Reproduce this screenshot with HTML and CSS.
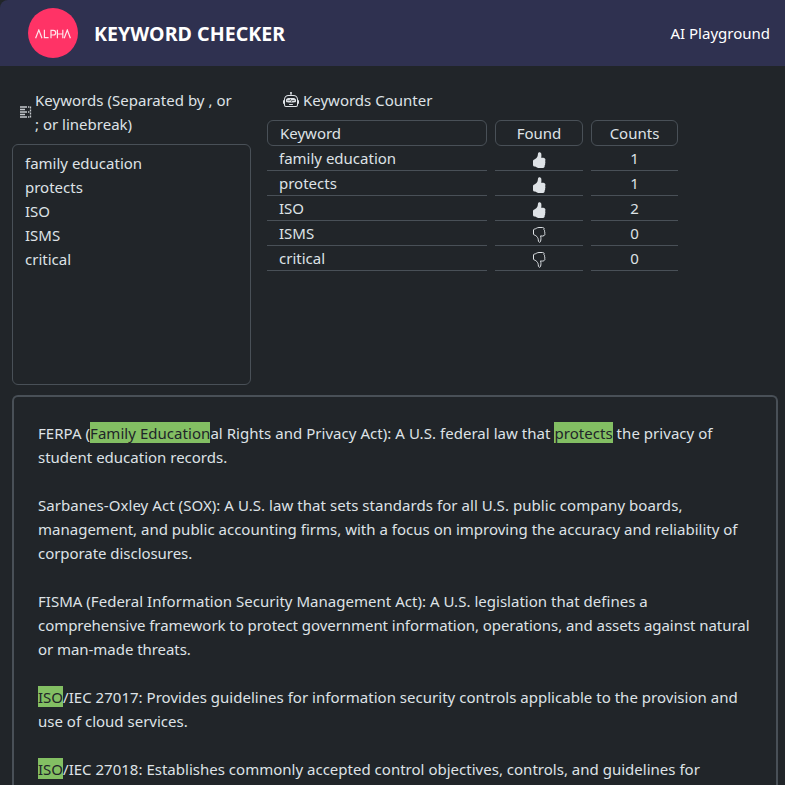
FILE: index.html
```html
<!DOCTYPE html>
<html lang="en">
<head>
<meta charset="utf-8">
<title>Keyword Checker</title>
<link rel="stylesheet" href="styles.css">
</head>
<body>
<svg class="defs" aria-hidden="true">
  <symbol id="thumb-up" viewBox="0 0 16 16"><path fill="currentColor" d="M6.956 1.745C7.021.81 7.908.087 8.864.325l.261.066c.463.116.874.456 1.012.965.22.816.533 2.511.062 4.51a9.84 9.84 0 0 1 .443-.051c.713-.065 1.669-.072 2.516.21.518.173.994.681 1.2 1.273.184.532.16 1.162-.234 1.733.058.119.103.242.138.363.077.27.113.567.113.856 0 .289-.036.586-.113.856-.039.135-.09.273-.16.404.169.387.107.819-.003 1.148a3.163 3.163 0 0 1-.488.901c.054.152.076.312.076.465 0 .305-.089.625-.253.912C13.1 15.522 12.437 16 11.5 16H8c-.605 0-1.07-.081-1.466-.218a4.82 4.82 0 0 1-.97-.484l-.048-.03c-.504-.307-.999-.609-2.068-.722C2.682 14.464 2 13.846 2 13V9c0-.85.685-1.432 1.357-1.615.849-.232 1.574-.787 2.132-1.41.56-.627.914-1.28 1.039-1.639.199-.575.356-1.539.428-2.59z"/></symbol>
  <symbol id="thumb-down" viewBox="0 0 16 16"><path fill="none" stroke="currentColor" d="M8.9 15.2c-.7.2-1.4-.3-1.45-1-.07-1.1-.24-2.1-.45-2.75-.35-1.1-1.7-2.9-3.5-3.4C2.9 7.9 2.5 7.5 2.5 7V3c0-.5.4-.9 1-.96 1.9-.2 2.2-1.54 4.5-1.54h3.5c1.1 0 1.8.7 1.6 1.6l-.2.5c.5.4.9 1 .6 1.7.4.5.4 1.4.1 1.9.5.6.4 1.7-.5 2.4-.8.6-2.4.5-3.5.3.5 1.8.4 3.6 0 5.3-.1.5-.3.8-.7 1z"/></symbol>
</svg>
<header class="topbar">
  <div class="logo"><svg class="logo-mark" viewBox="0 0 36 10" role="img" aria-label="Alpha"><path d="M.6 9.2 3.8 1 7 9.2M9.4.8v7.9h4.2M16 9.3V1.4h2.4a2.2 2.2 0 0 1 0 4.6H16M22.4.8v8.5M27.8.8v8.5M22.4 5h5.4M29.2 9.2 32.3 1l3.1 8.2"/></svg></div>
  <h1 class="title">KEYWORD CHECKER</h1>
  <a class="nav-link">AI Playground</a>
</header>
<main>
  <div class="upper">
    <section class="keywords">
      <div class="keywords-label">
        <svg class="list-icon" viewBox="0 0 12 12"><path d="M0 1h7M0 3.5h5M0 6h7M0 8.5h5M0 11h7M8 1h1.3M8 6h1.3M8 11h1.3M10.5 .5v2M10.5 3.5v2M10.5 6.5v2M10.5 9.5v2"/></svg>
        <div><span class="label-first">Keywords (Separated by , or</span><br>; or linebreak)</div>
      </div>
      <div class="keyword-input">family education<br>protects<br>ISO<br>ISMS<br>critical</div>
    </section>
    <section class="counter">
      <div class="counter-title">
        <svg class="robot" viewBox="0 0 16 16"><path fill="currentColor" fill-rule="evenodd" d="M6 12.5a.5.5 0 0 1 .5-.5h3a.5.5 0 0 1 0 1h-3a.5.5 0 0 1-.5-.5ZM3 8.062C3 6.76 4.235 5.765 5.53 5.886a26.58 26.58 0 0 0 4.94 0C11.765 5.765 13 6.76 13 8.062v1.157a.933.933 0 0 1-.765.935c-.845.147-2.34.346-4.235.346-1.895 0-3.39-.2-4.235-.346A.933.933 0 0 1 3 9.219V8.062Zm4.542-.827a.25.25 0 0 0-.217.068l-.92.9a24.767 24.767 0 0 1-1.871-.183.25.25 0 0 0-.068.495c.55.076 1.232.149 2.02.193a.25.25 0 0 0 .189-.071l.754-.736.847 1.71a.25.25 0 0 0 .404.062l.932-.97a25.286 25.286 0 0 0 1.922-.188.25.25 0 0 0-.068-.495c-.538.074-1.207.145-1.98.189a.25.25 0 0 0-.166.076l-.754.785-.842-1.7a.25.25 0 0 0-.182-.135Z"/><path fill="currentColor" d="M8.5 1.866a1 1 0 1 0-1 0V3h-2A4.5 4.5 0 0 0 1 7.5V8a1 1 0 0 0-1 1v2a1 1 0 0 0 1 1v1a2 2 0 0 0 2 2h10a2 2 0 0 0 2-2v-1a1 1 0 0 0 1-1V9a1 1 0 0 0-1-1v-.5A4.5 4.5 0 0 0 10.5 3h-2V1.866ZM14 7.5V13a1 1 0 0 1-1 1H3a1 1 0 0 1-1-1V7.5A3.5 3.5 0 0 1 5.5 4h5A3.5 3.5 0 0 1 14 7.5Z"/></svg>
        <span>Keywords Counter</span>
      </div>
      <div class="grid head"><div>Keyword</div><div>Found</div><div>Counts</div></div>
      <div class="grid row"><div>family education</div><div><svg class="thumb"><use href="#thumb-up"/></svg></div><div>1</div></div>
      <div class="grid row"><div>protects</div><div><svg class="thumb"><use href="#thumb-up"/></svg></div><div>1</div></div>
      <div class="grid row"><div>ISO</div><div><svg class="thumb"><use href="#thumb-up"/></svg></div><div>2</div></div>
      <div class="grid row"><div>ISMS</div><div><svg class="thumb"><use href="#thumb-down"/></svg></div><div>0</div></div>
      <div class="grid row"><div>critical</div><div><svg class="thumb"><use href="#thumb-down"/></svg></div><div>0</div></div>
    </section>
  </div>
  <article class="document">
    <p><span class="loose">FERPA (<mark>Family Education</mark>al Rights and Privacy Act): A U.S. federal law that <mark>protects</mark> the privacy of</span><br>student education records.</p>
    <p><span class="looser">Sarbanes-Oxley Act (SOX): A U.S. law that sets standards for all U.S. public company boards,</span><br><span class="slight">management, and public accounting firms, with a focus on improving the accuracy and reliability of</span><br><span class="tight">corporate disclosures.</span></p>
    <p><span class="medium">FISMA (Federal Information Security Management Act): A U.S. legislation that defines a</span><br><span class="tight">comprehensive framework to protect government information, operations, and assets against natural</span><br><span class="tight">or man-made threats.</span></p>
    <p><span class="medium"><mark>ISO</mark>/IEC 27017: Provides guidelines for information security controls applicable to the provision and</span><br>use of cloud services.</p>
    <p><span class="slight"><mark>ISO</mark>/IEC 27018: Establishes commonly accepted control objectives, controls, and guidelines for</span></p>
  </article>
</main>
</body>
</html>
```
FILE: styles.css
```css
* { box-sizing: border-box; }
html { background: #212529; }
body {
  display: flex;
  flex-direction: column;
  margin: 0;
  height: 100vh;
  overflow: hidden;
  background: #212529;
  color: #dee2e6;
  font: 15px/24px "Noto Sans", "Open Sans", sans-serif;
  white-space: nowrap;
}
.defs { display: none; }
.topbar {
  display: flex;
  flex: none;
  align-items: center;
  height: 66px;
  padding: 0 15px 0 28px;
  background: #2f3150;
  border-top-left-radius: 8px;
}
.logo {
  display: flex;
  align-items: center;
  justify-content: center;
  width: 50px;
  height: 50px;
  border-radius: 50%;
  background: #ff3366;
}
.logo-mark { width: 36px; height: 10px; margin-top: 1px; fill: none; stroke: #ffe3ea; stroke-width: 1.2; }
.title { margin: 2px auto 0 16px; font-size: 19.6px; font-weight: 700; letter-spacing: 0.03px; color: #fff; }
.nav-link { color: #fff; }
.upper { display: flex; gap: 16px; padding: 22px 12px 0; }
.keywords { width: 239px; }
.keywords-label { display: flex; align-items: center; gap: 3px; padding-left: 8px; height: 48px; }
.label-first { letter-spacing: 0.03px; }
.list-icon { width: 12px; height: 12px; margin-top: -1px; fill: none; stroke: #c4c8cc; stroke-width: 1.3; }
.keyword-input {
  height: 241px;
  margin-top: 8px;
  padding: 6px 12px;
  border: 1px solid #495057;
  border-radius: 6px;
}
.counter { width: 411px; }
.counter-title { display: flex; align-items: center; gap: 4px; height: 24px; margin-bottom: 8px; padding-left: 16px; }
.robot { width: 16px; height: 16px; }
.grid { display: grid; grid-template-columns: 220px 88px 87px; column-gap: 8px; text-align: center; }
.grid > :first-child { padding-left: 12px; text-align: left; }
.head > div { height: 26px; border: 1px solid #495057; border-radius: 6px; }
.row > div { height: 25px; border-bottom: 1px solid #495057; }
.thumb { display: block; width: 16px; height: 16px; margin: 6px auto 0; }
.document {
  height: 390px;
  overflow: hidden;
  margin: 10px 7px 0 12px;
  padding: 24px;
  border: 2px solid #495057;
  border-bottom: 0;
  border-radius: 6px 6px 0 0;
}
.document p { margin: 0 0 24px; }
.document p:last-child { margin-bottom: 0; }
.slight { letter-spacing: 0.01px; }
.medium { letter-spacing: 0.022px; }
.loose { letter-spacing: 0.043px; }
.looser { letter-spacing: 0.054px; }
.tight { letter-spacing: -0.05px; }
mark { padding-top: 1px; background: #83bf63; color: #212529; }
```
